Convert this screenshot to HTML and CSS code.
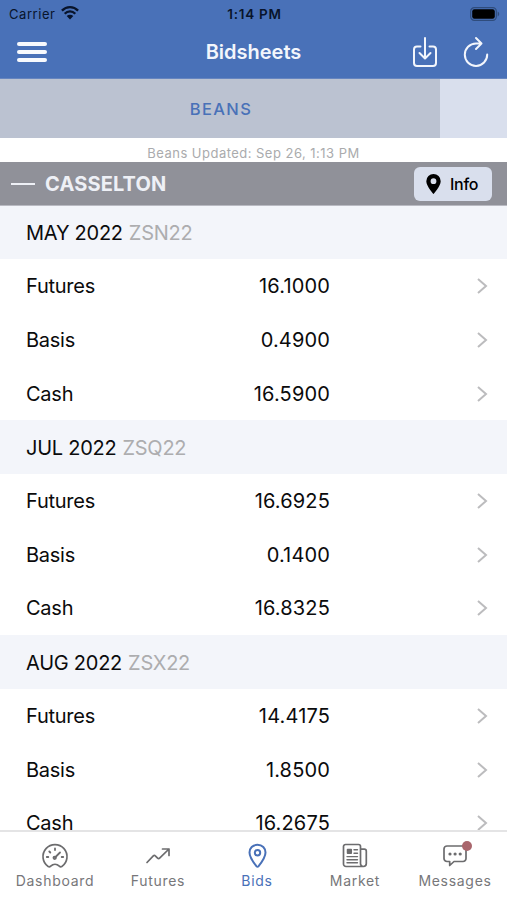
FILE: index.html
```html
<!DOCTYPE html>
<html lang="en">
<head>
<meta charset="utf-8">
<title>Bidsheets</title>
<link rel="stylesheet" href="styles.css">
</head>
<body>
<div class="app">
  <header class="header">
    <div class="status">
      <div class="carrier"><span>Carrier</span>
        <svg class="wifi" width="18" height="14" viewBox="0 0 18 14" fill="none" stroke="#08142b" stroke-width="2.3"><path d="M.9 4.600C5.500 0 12.500 0 17.100 4.600M3.700 7.700c3-3 7.600-3 10.600 0"/><path d="M5.700 10c1.900-1.800 4.700-1.800 6.600 0L9 13.400z" fill="#08142b" stroke="none"/></svg>
      </div>
      <div class="clock">1:14 PM</div>
      <svg class="battery" width="30" height="14" viewBox="0 0 30 14"><rect x=".7" y=".7" width="25.600" height="12.600" rx="3.600" fill="none" stroke="#2f4c7c" stroke-width="1.200"/><rect x="2.200" y="2.200" width="22.600" height="9.600" rx="2.200" fill="#000"/><path d="M27.700 4.600c2 .8 2 4 0 4.800z" fill="#2f4c7c"/></svg>
    </div>
    <div class="navbar">
      <div class="menu"><i></i><i></i><i></i></div>
      <h1 class="title">Bidsheets</h1>
      <div class="actions">
        <svg width="26" height="32" viewBox="0 0 26 32" fill="none" stroke="#f3f6fc" stroke-width="2" stroke-linecap="round" stroke-linejoin="round"><path d="M8.500 10.500H5a3 3 0 0 0-3 3V27a3 3 0 0 0 3 3h16a3 3 0 0 0 3-3V13.500a3 3 0 0 0-3-3h-3.500M13 2v20M7.500 17l5.500 5.500 5.500-5.500"/></svg>
        <svg width="26" height="32" viewBox="0 0 26 32" fill="none" stroke="#f3f6fc" stroke-width="2" stroke-linecap="round" stroke-linejoin="round"><path d="M18.500 7.500H13A11.200 11.200 0 1 0 24.200 18.500M13 2l5.500 5.500L13 13"/></svg>
      </div>
    </div>
  </header>
  <nav class="tabs"><div class="tab">BEANS</div></nav>
  <div class="updated"><span>Beans Updated: Sep 26, 1:13 PM</span></div>
  <div class="location">
    <i class="collapse"></i><span class="place">CASSELTON</span>
    <button class="info"><svg width="15" height="20" viewBox="0 0 15 20"><path fill-rule="evenodd" d="M7.500 0A7.200 7.200 0 0 0 .3 7.200C.3 12 7.500 20 7.500 20s7.200-8 7.200-12.800A7.200 7.200 0 0 0 7.500 0zm0 4.300a2.900 2.900 0 1 1 0 5.800 2.900 2.900 0 0 1 0-5.800z"/></svg><span>Info</span></button>
  </div>
  <main class="list">
    <div class="month"><span>MAY 2022</span><b>ZSN22</b></div>
    <div class="row"><span>Futures</span><em>16.1000</em><svg class="chev" viewBox="0 0 12 18"><path d="M2 2l8 7-8 7"/></svg></div>
    <div class="row"><span>Basis</span><em>0.4900</em><svg class="chev" viewBox="0 0 12 18"><path d="M2 2l8 7-8 7"/></svg></div>
    <div class="row"><span>Cash</span><em>16.5900</em><svg class="chev" viewBox="0 0 12 18"><path d="M2 2l8 7-8 7"/></svg></div>
    <div class="month"><span>JUL 2022</span><b>ZSQ22</b></div>
    <div class="row"><span>Futures</span><em>16.6925</em><svg class="chev" viewBox="0 0 12 18"><path d="M2 2l8 7-8 7"/></svg></div>
    <div class="row"><span>Basis</span><em>0.1400</em><svg class="chev" viewBox="0 0 12 18"><path d="M2 2l8 7-8 7"/></svg></div>
    <div class="row"><span>Cash</span><em>16.8325</em><svg class="chev" viewBox="0 0 12 18"><path d="M2 2l8 7-8 7"/></svg></div>
    <div class="month"><span>AUG 2022</span><b>ZSX22</b></div>
    <div class="row"><span>Futures</span><em>14.4175</em><svg class="chev" viewBox="0 0 12 18"><path d="M2 2l8 7-8 7"/></svg></div>
    <div class="row"><span>Basis</span><em>1.8500</em><svg class="chev" viewBox="0 0 12 18"><path d="M2 2l8 7-8 7"/></svg></div>
    <div class="row"><span>Cash</span><em>16.2675</em><svg class="chev" viewBox="0 0 12 18"><path d="M2 2l8 7-8 7"/></svg></div>
  </main>
  <footer class="tabbar">
    <div class="item"><svg width="28" height="26" viewBox="0 0 28 26"><path d="M7.200 23.500A12 12 0 1 1 20.800 23.500c-1 .6-1.700.4-2.500-.4-2.500-2.300-6.100-2.300-8.600 0-.8.800-1.500 1-2.500.4z"/><path d="M14 14.500L19 9.500M14 5.500v1.500M8.300 8.500l1 1M5.800 14h1.500M20.700 14h1.500" stroke-width="1.800"/><circle cx="13.700" cy="14.800" r="1.300"/></svg><span>Dashboard</span></div>
    <div class="item"><svg width="28" height="26" viewBox="0 0 28 26"><path d="M3 19.500l6.300-6.700c.7-.7 1.400-.7 2 0l2.300 2.300c.7.700 1.400.7 2 0L25 6M18.500 6H25v6.500"/></svg><span>Futures</span></div>
    <div class="item active"><svg width="28" height="26" viewBox="0 0 28 26"><path d="M14.500 1.800c-4.800 0-8 3.400-8 7.700 0 4.500 4 10 6.900 13.600q1.100 1.200 2.200 0c2.900-3.600 6.900-9.100 6.900-13.600 0-4.300-3.200-7.700-8-7.700z"/><circle cx="14.500" cy="9.800" r="2.700"/></svg><span>Bids</span></div>
    <div class="item"><svg width="28" height="26" viewBox="0 0 28 26"><path d="M19.500 21V3.500a2 2 0 0 0-2-2H4.500a2 2 0 0 0-2 2V21a2.500 2.500 0 0 0 2.500 2.500h17.500M19.500 6.200h3.800a2 2 0 0 1 2 2v12.400a2.900 2.900 0 0 1-5.800 0V6.200"/><path d="M13 6.800h3.500M13 10.200h3.500M6 13.600h10.500M6 16.700h10.500M6 19.800h10.500" stroke-width="1.400"/><rect x="6.600" y="6.500" width="3.600" height="3.600" fill="#6c6c6e"/></svg><span>Market</span></div>
    <div class="item"><svg width="28" height="26" viewBox="0 0 28 26"><path d="M6 3h16a3 3 0 0 1 3 3v9.500a3 3 0 0 1-3 3H13L8.700 22.500v-4H6a3 3 0 0 1-3-3V6a3 3 0 0 1 3-3z"/><g fill="#6c6c6e" stroke="none"><circle cx="9" cy="11" r="1.600"/><circle cx="14.100" cy="11" r="1.600"/><circle cx="19.200" cy="11" r="1.600"/></g></svg><i class="badge"></i><span>Messages</span></div>
  </footer>
</div>
</body>
</html>
```
FILE: styles.css
```css
* { box-sizing: border-box; }
body { margin: 0; background: #fff; font-family: Inter, "Liberation Sans", sans-serif; color: #0b0b0c; }
.app { width: 507px; height: 900px; overflow: hidden; display: flex; flex-direction: column; }
.header { flex: none; height: 79px; background: #4971b8; border-bottom: 1px solid #6685bf; }
.status { height: 27px; display: grid; grid-template-columns: 1fr auto 1fr; align-items: center; padding: 0 7px 0 9px; color: #08142b; font-size: 13px; line-height: 28px; }
.carrier { display: flex; align-items: center; gap: 6px; letter-spacing: .55px; }
.wifi { margin-bottom: 2px; }
.clock { font-size: 13.500px; font-weight: 600; letter-spacing: .75px; }
.battery { justify-self: end; margin-bottom: 1px; }
.navbar { height: 50px; display: grid; grid-template-columns: 1fr auto 1fr; align-items: center; padding: 0 17px; }
.menu { display: grid; gap: 4px; width: 30px; }
.menu i { height: 4px; border-radius: 2px; background: #f7f9fd; }
.title { margin: 0; font-size: 20px; font-weight: 600; letter-spacing: 0; color: #f3f6fc; line-height: 30px; }
.actions { display: flex; justify-content: flex-end; gap: 25px; margin-right: 1px; }
.tabs { flex: none; height: 59px; background: #d9dfed; }
.tab { width: 440px; height: 59px; background: #bbc2d1; color: #4971b8; font-size: 16.500px; font-weight: 500; letter-spacing: 1.400px; text-indent: 2px; line-height: 60px; text-align: center; }
.updated { flex: none; height: 24px; text-align: center; color: #aaabad; font-size: 13px; line-height: 30px; letter-spacing: .47px; }
.location { flex: none; height: 43.500px; background: #909199; display: flex; align-items: center; padding: 1px 15px 0 11px; border-bottom: 1px solid #b9bac2; }
.collapse { width: 24px; height: 2px; background: #eef0f6; }
.place { margin-left: 10px; flex: 1; color: #eef0f6; font-size: 20px; font-weight: 700; letter-spacing: .15px; line-height: 24px; padding-top: 1px; }
.info { width: 78px; height: 34px; border: 0; border-radius: 6px; background: #d9dfed; display: flex; align-items: center; gap: 9px; padding: 0 0 0 12px; font: 500 16px Inter, sans-serif; letter-spacing: -.3px; color: #000; }
.list { flex: 1; min-height: 0; overflow: hidden; }
.month, .row { height: 53.720px; padding-left: 26px; display: flex; align-items: center; font-size: 20px; letter-spacing: -.25px; }
.month { background: #f3f5fa; gap: 6px; padding-top: 1px; }
.month b { font-weight: 400; color: #adadaf; }
.row span { width: 104px; }
.row em { width: 200px; font-style: normal; text-align: right; letter-spacing: .15px; }
.chev { width: 12px; height: 18px; margin-left: 146px; fill: none; stroke: #bcbcbe; stroke-width: 2; }
.tabbar { flex: none; height: 70px; border-top: 2px solid #e4e4e5; background: #fff; display: grid; grid-template-columns: 104px 102px 96px 100px 100px; padding: 11px 0 0 3px; color: #77777a; }
.item { position: relative; display: flex; flex-direction: column; align-items: center; font-size: 14px; letter-spacing: .7px; line-height: 20px; gap: 2px; }
.item svg { fill: none; stroke: #6c6c6e; stroke-width: 1.700; stroke-linecap: round; stroke-linejoin: round; }
.item.active { color: #4971b8; }
.item.active svg { stroke: #4971b8; stroke-width: 2; }
.badge { position: absolute; top: -2px; left: 57px; width: 10px; height: 10px; border-radius: 50%; background: #a9666c; }
```
